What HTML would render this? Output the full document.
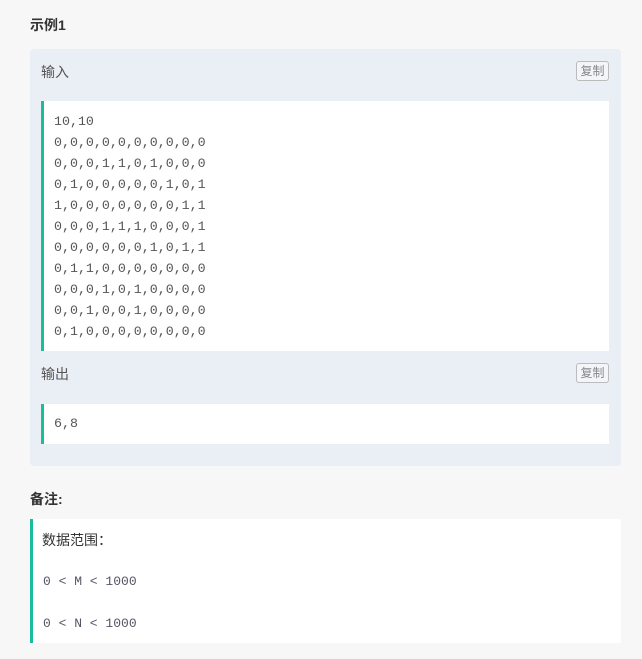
<!DOCTYPE html>
<html><head><meta charset="utf-8"><style>
body{margin:0;background:#f7f7f7;font-family:"Liberation Sans","Noto Sans CJK SC",sans-serif;width:642px;height:659px;position:relative;overflow:hidden;color:#333}
.t{position:absolute;left:30px;font-weight:bold;font-size:14px;color:#333}
.box{position:absolute;left:30px;top:49px;width:591px;height:417px;background:#eaeef5;border-radius:4px}
.lbl{position:absolute;left:11px;font-size:14px;color:#555}
.cp{position:absolute;left:546px;width:31px;height:18px;border:1px solid #bbb;border-radius:3px;font-size:12px;color:#888;text-align:center;line-height:18px;background:#f4f5f8}
.code{position:absolute;left:11px;width:568px;background:#fff;border-left:3px solid #1abc9c;font-family:"Liberation Mono",monospace;font-size:13.3px;color:#555;line-height:21px;padding-left:10px;box-sizing:border-box}
.rm{position:absolute;left:30px;top:519px;width:591px;height:124px;background:#fff;border-left:3px solid #1abc9c;box-sizing:border-box}
.mono{font-family:"Liberation Mono",monospace;font-size:13px;color:#556;position:absolute;left:10px}
</style></head><body>
<div class="t" style="top:15px">示例1</div>
<div class="box">
<div class="lbl" style="top:13px">输入</div>
<div class="cp" style="top:12px">复制</div>
<div class="code" style="top:52px;height:250px;padding-top:10px">10,10<br>0,0,0,0,0,0,0,0,0,0<br>0,0,0,1,1,0,1,0,0,0<br>0,1,0,0,0,0,0,1,0,1<br>1,0,0,0,0,0,0,0,1,1<br>0,0,0,1,1,1,0,0,0,1<br>0,0,0,0,0,0,1,0,1,1<br>0,1,1,0,0,0,0,0,0,0<br>0,0,0,1,0,1,0,0,0,0<br>0,0,1,0,0,1,0,0,0,0<br>0,1,0,0,0,0,0,0,0,0</div>
<div class="lbl" style="top:315px">输出</div>
<div class="cp" style="top:314px">复制</div>
<div class="code" style="top:355px;height:40px;padding-top:9px">6,8</div>
</div>
<div class="t" style="top:489px">备注:</div>
<div class="rm">
<div style="position:absolute;left:9px;top:11px;font-size:14px;color:#333">数据范围：</div>
<div class="mono" style="top:55px">0 &lt; M &lt; 1000</div>
<div class="mono" style="top:97px">0 &lt; N &lt; 1000</div>
</div>
</body></html>
